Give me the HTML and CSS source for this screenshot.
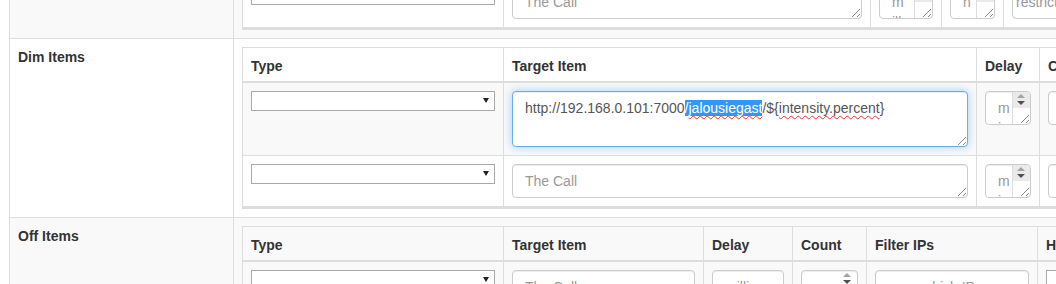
FILE: index.html
```html
<!DOCTYPE html>
<html>
<head>
<meta charset="utf-8" />
<title>Items</title>
<link rel="stylesheet" href="styles.css">
</head>
<body>
<div class="items">

  <div class="item odd">
    <div class="item_name"></div>
    <div class="item_body">
      <div class="grid prev">
        <div class="row even">
          <div class="cell"><div class="select"></div></div>
          <div class="cell"><div class="field placeholder grip">The Call</div></div>
          <div class="cell">
            <div class="field num">
              <div class="num_text">milliseconds</div>
              <div class="num_side"><div class="spin"></div></div>
            </div>
          </div>
          <div class="cell">
            <div class="field num">
              <div class="num_text">number</div>
              <div class="num_side"><div class="spin"></div></div>
            </div>
          </div>
          <div class="cell"><div class="field placeholder narrow">restrict to IPs</div></div>
        </div>
      </div>
    </div>
  </div>

  <div class="item">
    <div class="item_name">Dim Items</div>
    <div class="item_body">
      <div class="grid dim">
        <div class="row head">
          <div class="cell">Type</div>
          <div class="cell">Target Item</div>
          <div class="cell">Delay</div>
          <div class="cell">Count</div>
        </div>
        <div class="row odd">
          <div class="cell"><div class="select"></div></div>
          <div class="cell">
            <div class="field focus grip">http://192.168.0.101:7000<span class="sel">/<span class="typo">jalousiegast</span></span>/${<span class="typo">intensity.percent</span>}</div>
          </div>
          <div class="cell">
            <div class="field num">
              <div class="num_text">milliseconds</div>
              <div class="num_side"><div class="spin"></div></div>
            </div>
          </div>
          <div class="cell"><div class="field"></div></div>
        </div>
        <div class="row even">
          <div class="cell"><div class="select"></div></div>
          <div class="cell"><div class="field placeholder grip">The Call</div></div>
          <div class="cell">
            <div class="field num">
              <div class="num_text">milliseconds</div>
              <div class="num_side"><div class="spin"></div></div>
            </div>
          </div>
          <div class="cell"><div class="field"></div></div>
        </div>
      </div>
    </div>
  </div>

  <div class="item odd">
    <div class="item_name">Off Items</div>
    <div class="item_body">
      <div class="grid off">
        <div class="row head">
          <div class="cell">Type</div>
          <div class="cell">Target Item</div>
          <div class="cell">Delay</div>
          <div class="cell">Count</div>
          <div class="cell">Filter IPs</div>
          <div class="cell">Hold</div>
        </div>
        <div class="row odd">
          <div class="cell"><div class="select"></div></div>
          <div class="cell"><div class="field placeholder">The Call</div></div>
          <div class="cell"><div class="field placeholder">milliseconds</div></div>
          <div class="cell">
            <div class="field num">
              <div class="num_text"></div>
              <div class="num_side bare"><div class="spin"></div></div>
            </div>
          </div>
          <div class="cell"><div class="field placeholder center">which IPs</div></div>
          <div class="cell"><div class="select"></div></div>
        </div>
      </div>
    </div>
  </div>

</div>
</body>
</html>
```

FILE: styles.css
```css
html, body {
  overflow: hidden;
}
body {
  margin: 0;
  padding-left: 9px;
  font-family: "Liberation Sans", Arial, sans-serif;
  font-size: 14px;
  line-height: 20px;
  color: #333;
  background-color: #fff;
}
.items {
  margin-top: -32px;
  width: 1300px;
  border-left: 1px solid #ddd;
}
.item {
  display: grid;
  grid-template-columns: 224px 1fr;
  border-bottom: 1px solid #ddd;
}
.item.odd {
  background-color: #f9f9f9;
}
.item_name {
  padding: 8px;
  font-weight: bold;
  border-right: 1px solid #ddd;
}
.item_body {
  padding: 8px;
  min-width: 0;
}

/* nested tables */
.grid {
  border: 1px solid #ddd;
  border-bottom: 3px solid #ddd;
}
.row {
  display: grid;
}
.row.odd {
  background-color: #f9f9f9;
}
.row.even {
  background-color: #fff;
}
.row.odd + .row, .row.even + .row {
  border-top: 1px solid #ddd;
}
.row.head {
  border-bottom: 2px solid #ddd;
  font-weight: bold;
}
.prev > .row {
  grid-template-columns: 261px 367px 71px 62px 300px;
}
.dim > .row {
  grid-template-columns: 261px 473px 63px 300px;
}
.off > .row {
  grid-template-columns: 261px 200px 89px 74px 171px 200px;
}
.cell {
  padding: 8px;
  border-right: 1px solid #ddd;
  min-width: 0;
}
.head > .cell {
  padding: 8px 8px 5px;
  white-space: nowrap;
}

/* controls */
.select {
  position: relative;
  box-sizing: border-box;
  height: 20px;
  border: 1px solid #a9a9a9;
  background-color: #fff;
}
.select::after {
  content: "";
  position: absolute;
  right: 5px;
  top: 6px;
  border-left: 3px solid transparent;
  border-right: 3px solid transparent;
  border-top: 5px solid #222;
}
.field {
  position: relative;
  box-sizing: border-box;
  height: 34px;
  padding: 6px 12px;
  border: 1px solid #ccc;
  border-radius: 4px;
  background-color: #fff;
  box-shadow: inset 0 1px 1px rgba(0, 0, 0, .075);
  color: #555;
  white-space: nowrap;
  overflow: hidden;
}
.field.focus {
  height: 56px;
  border-color: #66afe9;
  box-shadow: inset 0 1px 1px rgba(0, 0, 0, .075), 0 0 8px rgba(102, 175, 233, .6);
}
.placeholder, .num_text {
  color: #999;
}
.field.center {
  text-align: center;
}
.field.narrow {
  padding-left: 3px;
}
.grip::after, .num_side::after {
  content: "";
  position: absolute;
  right: 1px;
  bottom: 1px;
  width: 9px;
  height: 9px;
  background: linear-gradient(135deg, transparent 52%, #8a8a8a 52%, #8a8a8a 60%, transparent 60%, transparent 78%, #8a8a8a 78%, #8a8a8a 86%, transparent 86%);
}
.sel {
  background-color: #3297fd;
  color: #fff;
}
.typo {
  text-decoration: underline wavy #e33;
  text-decoration-thickness: 1px;
  text-underline-offset: 2px;
  text-decoration-skip-ink: none;
}

/* number fields */
.field.num {
  display: flex;
  padding: 0;
}
.num_text {
  flex: 1;
  min-width: 0;
  padding: 6px 12px 0;
  white-space: normal;
  word-break: break-all;
  overflow: hidden;
}
.num_side {
  position: relative;
  box-sizing: border-box;
  width: 18px;
  border-left: 1px solid #ddd;
}
.num_side.bare {
  border-left: none;
}
.num_side.bare::after {
  display: none;
}
.spin {
  position: relative;
  height: 16px;
  background-color: #eaeaea;
}
.bare .spin {
  background-color: transparent;
}
.spin::before, .spin::after {
  content: "";
  position: absolute;
  left: 4px;
  border-left: 4px solid transparent;
  border-right: 4px solid transparent;
}
.spin::before {
  top: 2px;
  border-bottom: 4px solid #a3a3a3;
}
.spin::after {
  top: 9px;
  border-top: 4px solid #505050;
}
```
